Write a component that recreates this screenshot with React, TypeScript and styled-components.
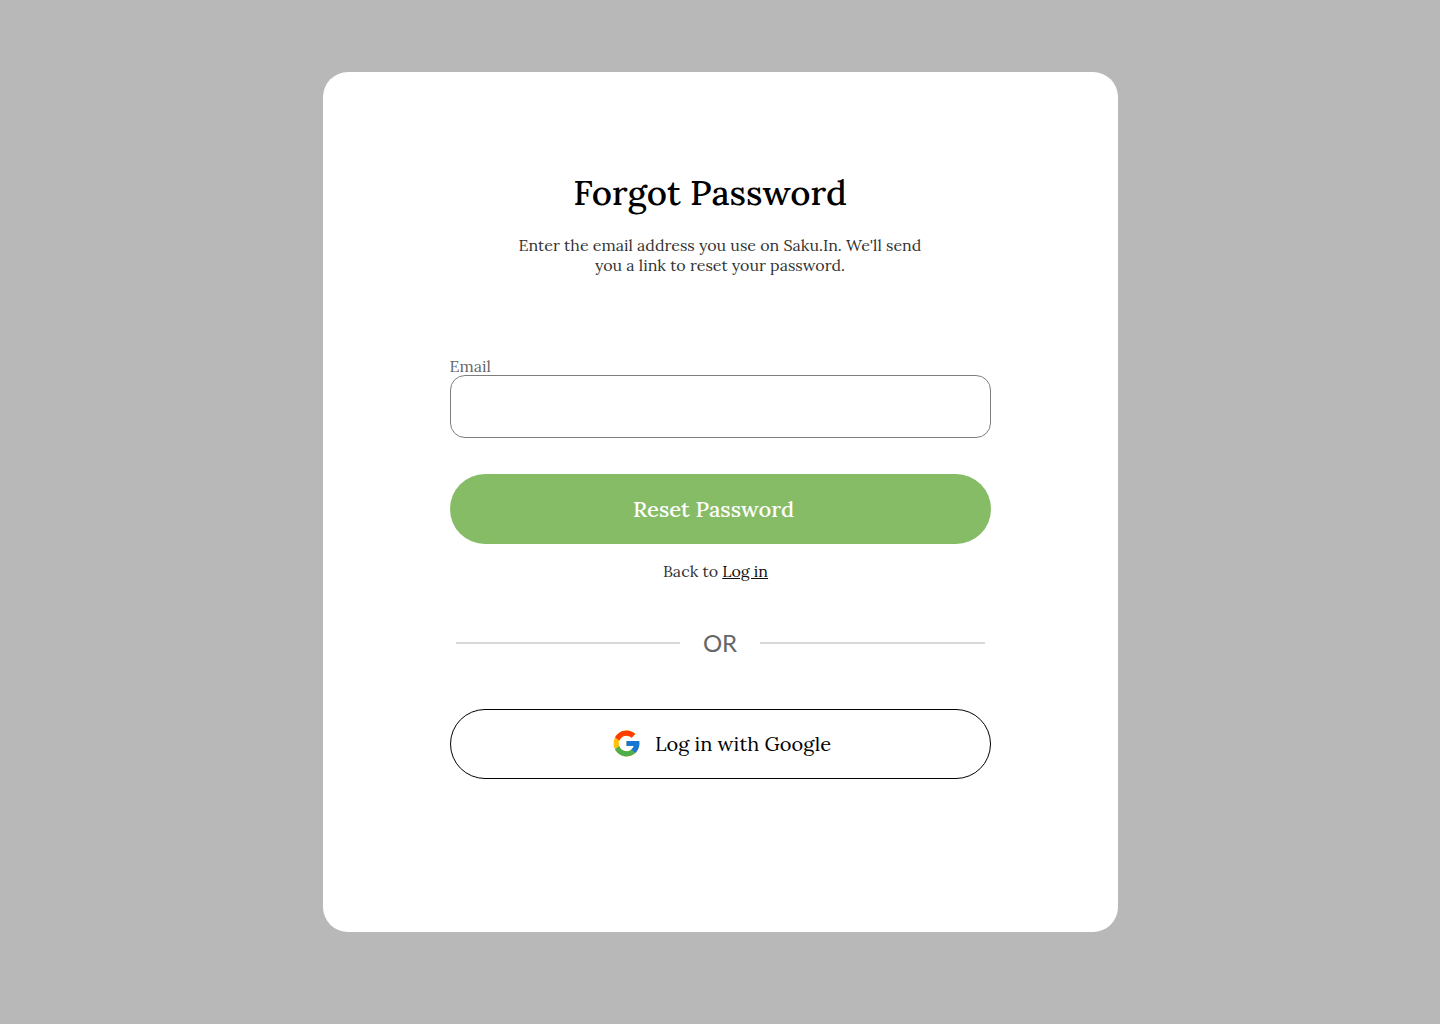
import React from "react";
import styled, { createGlobalStyle } from "styled-components";
import { FcGoogle } from "react-icons/fc";

const serif = '"Lora", "Liberation Serif", serif';

const GlobalStyle = createGlobalStyle`
  *, *::before, *::after { box-sizing: border-box; }
  body { margin: 0; background: #b8b8b8; font-family: ${serif}; }
`;

const Page = styled.main`
  min-height: 100vh;
  padding: 72px 24px 92px;
  display: flex;
  justify-content: center;
  align-items: flex-start;
`;

const Card = styled.section`
  width: 100%;
  max-width: 795px;
  padding: 97px 127px 153px;
  border-radius: 25px;
  background: #fff;
  display: flex;
  flex-direction: column;
`;

const Header = styled.header`
  display: flex;
  flex-direction: column;
  align-items: center;
  gap: 18px;
  text-align: center;
`;

const Title = styled.h1`
  margin: 0;
  padding-right: 20px;
  font-size: 35px;
  line-height: 48px;
  font-weight: 500;
  color: #000;
`;

const Intro = styled.p`
  margin: 0;
  max-width: 420px;
  font-size: 16px;
  line-height: 20px;
  color: #333;
`;

const Form = styled.form`
  margin-top: 82px;
  display: flex;
  flex-direction: column;
`;

const Label = styled.label`
  font-size: 16px;
  line-height: 18px;
  color: #666;
`;

const Input = styled.input`
  width: 100%;
  height: 63px;
  margin: 0 0 36px;
  padding: 0 20px;
  border: 1px solid #7d7d7d;
  border-radius: 15px;
  background: #fff;
  font: 16px ${serif};
`;

const Button = styled.button<{ $primary?: boolean }>`
  width: 100%;
  height: 70px;
  display: flex;
  align-items: center;
  justify-content: center;
  gap: 13px;
  border: ${(p) => (p.$primary ? "0" : "1px solid #000")};
  border-radius: 40px;
  background: ${(p) => (p.$primary ? "#87bc67" : "#fff")};
  color: ${(p) => (p.$primary ? "#fff" : "#000")};
  padding: ${(p) => (p.$primary ? "0 13px 0 0" : "0 0 2px 2px")};
  font: ${(p) => (p.$primary ? "500 22px" : "400 20px")} ${serif};
  cursor: pointer;
`;

const Back = styled.p`
  margin: 17px 0 0;
  padding-right: 9px;
  text-align: center;
  font-size: 16px;
  line-height: 20px;
  color: #333;
`;

const Link = styled.a`
  color: #111;
`;

const Divider = styled.div`
  margin: 46px 0 50px;
  padding: 0 6px;
  display: flex;
  align-items: center;
  gap: 23px;
  font: 24px/32px Lato, sans-serif;
  color: #666;
  &::before, &::after {
    content: "";
    flex: 1;
    height: 2px;
    background: #66666640;
  }
`;

export default function App() {
  return (
    <>
      <GlobalStyle />
      <Page>
        <Card>
          <Header>
            <Title>Forgot Password</Title>
            <Intro>Enter the email address you use on Saku.In. We'll send you a link to reset your password.</Intro>
          </Header>
          <Form onSubmit={(e) => e.preventDefault()}>
            <Label htmlFor="email">Email</Label>
            <Input id="email" type="email" />
            <Button type="submit" $primary>Reset Password</Button>
          </Form>
          <Back>Back to <Link href="#login">Log in</Link></Back>
          <Divider>OR</Divider>
          <Button type="button"><FcGoogle size={31} aria-hidden="true" />Log in with Google</Button>
        </Card>
      </Page>
    </>
  );
}
